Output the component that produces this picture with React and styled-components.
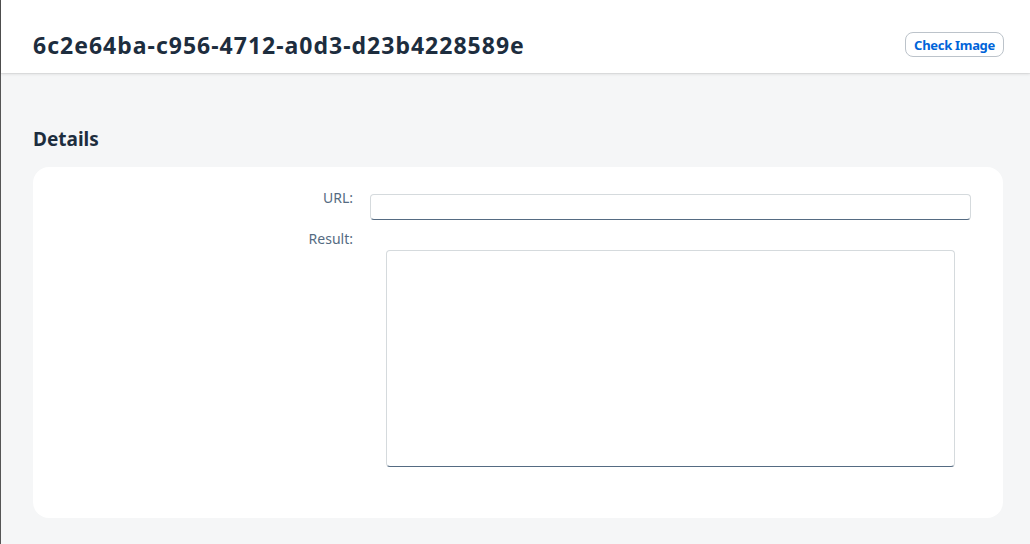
import React, { useState } from 'react';
import styled, { createGlobalStyle } from 'styled-components';

const GlobalStyle = createGlobalStyle`
  html, body {
    margin: 0;
    padding: 0;
    background: #f5f6f7;
  }
  body {
    font-family: 'Noto Sans', 'Liberation Sans', Arial, sans-serif;
    color: #1d2d3e;
  }
`;

const ScPage = styled.div`
  min-height: 544px;
  box-sizing: border-box;
  border-left: 1px solid #555;
  background: #f5f6f7;
`;

const ScHeader = styled.header`
  height: 73px;
  box-sizing: border-box;
  background: #fff;
  display: flex;
  align-items: center;
  justify-content: space-between;
  padding: 16px 26px 0 32px;
  box-shadow: 0 1px 3px rgba(0, 0, 0, 0.12), 0 0 0 0.5px rgba(0, 0, 0, 0.08);
  position: relative;
`;

const ScTitle = styled.h1`
  margin: 0;
  font-size: 23px;
  font-weight: 700;
  color: #1d2d3e;
  letter-spacing: 1px;
`;

const ScButton = styled.button`
  height: 25px;
  padding: 0 8px;
  border: 1px solid #bcc3ca;
  border-radius: 8px;
  background: #fff;
  color: #0064d9;
  font-family: inherit;
  font-size: 13px;
  font-weight: 700;
  letter-spacing: -0.3px;
  cursor: pointer;
`;

const ScContent = styled.main`
  padding: 53px 27px 27px 32px;
`;

const ScSectionTitle = styled.h2`
  margin: 0 0 15px;
  font-size: 19px;
  font-weight: 700;
  color: #1d2d3e;
`;

const ScCard = styled.section`
  background: #fff;
  border-radius: 16px;
  padding: 27px 32px 51px 0;
`;

const ScRow = styled.div`
  display: grid;
  grid-template-columns: 337px 1fr;
  align-items: start;
  margin-top: ${({ gap }) => gap || 0}px;
`;

const ScLabel = styled.label`
  text-align: right;
  padding-right: 17px;
  font-size: 14px;
  color: #556b82;
  line-height: 14px;
  margin-top: ${({ offset }) => offset || 0}px;
`;

const ScInput = styled.input`
  height: 26px;
  box-sizing: border-box;
  width: 100%;
  border: 1px solid #d5dadd;
  border-bottom: 1px solid #556b82;
  border-radius: 4px;
  background: #fff;
  padding: 0 8px;
  font-family: inherit;
  font-size: 14px;
  outline: none;
`;

const ScTextArea = styled.textarea`
  display: block;
  box-sizing: border-box;
  width: calc(100% - 32px);
  height: 217px;
  margin: 18px 16px 0;
  border: 1px solid #d5dadd;
  border-bottom: 1px solid #556b82;
  border-radius: 4px;
  resize: none;
  font-family: inherit;
  font-size: 14px;
  outline: none;
`;

const App = () => {
  const [url, setUrl] = useState('');
  const [result, setResult] = useState('');

  return (
    <>
      <GlobalStyle />
      <ScPage>
        <ScHeader>
          <ScTitle>6c2e64ba-c956-4712-a0d3-d23b4228589e</ScTitle>
          <ScButton>Check Image</ScButton>
        </ScHeader>

        <ScContent>
          <ScSectionTitle>Details</ScSectionTitle>
          <ScCard>
            <ScRow>
              <ScLabel htmlFor='url' offset={-3}>URL:</ScLabel>
              <ScInput id='url' value={url} onChange={(e) => setUrl(e.target.value)} />
            </ScRow>
            <ScRow gap={12}>
              <ScLabel htmlFor='result'>Result:</ScLabel>
              <div>
                <ScTextArea id='result' value={result} onChange={(e) => setResult(e.target.value)} />
              </div>
            </ScRow>
          </ScCard>
        </ScContent>
      </ScPage>
    </>
  );
};

export default App;
